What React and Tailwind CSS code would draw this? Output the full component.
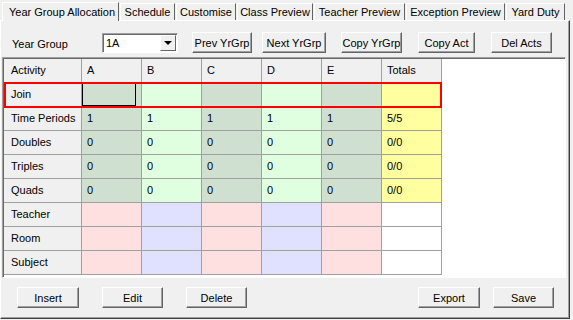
import React from "react";

const tabs = [
  { label: "Schedule", w: 55 },
  { label: "Customise", w: 60 },
  { label: "Class Preview", w: 76 },
  { label: "Teacher Preview", w: 91 },
  { label: "Exception Preview", w: 99 },
  { label: "Yard Duty", w: 59 },
];

const cols = ["A", "B", "C", "D", "E"];

const rows = [
  { name: "Join", vals: ["", "", "", "", ""], total: "", kind: "green" },
  { name: "Time Periods", vals: ["1", "1", "1", "1", "1"], total: "5/5", kind: "green" },
  { name: "Doubles", vals: ["0", "0", "0", "0", "0"], total: "0/0", kind: "green" },
  { name: "Triples", vals: ["0", "0", "0", "0", "0"], total: "0/0", kind: "green" },
  { name: "Quads", vals: ["0", "0", "0", "0", "0"], total: "0/0", kind: "green" },
  { name: "Teacher", vals: ["", "", "", "", ""], total: "", kind: "pink" },
  { name: "Room", vals: ["", "", "", "", ""], total: "", kind: "pink" },
  { name: "Subject", vals: ["", "", "", "", ""], total: "", kind: "pink" },
];

function cellBg(kind, i) {
  const odd = i % 2 === 0;
  if (kind === "green") return odd ? "bg-[#d0e0d0]" : "bg-[#e0ffe0]";
  return odd ? "bg-[#ffe0e0]" : "bg-[#e0e0ff]";
}

function Btn({ children, w, className = "" }) {
  return (
    <div
      className={`flex h-[21px] items-center justify-center whitespace-nowrap border border-t-white border-l-white border-r-[#646464] border-b-[#646464] bg-[#f0f0f0] pt-[1px] shadow-[inset_-1px_-1px_0_#a0a0a0] ${className}`}
      style={{ width: w }}
    >
      {children}
    </div>
  );
}

export default function App() {
  return (
    <div
      className="relative h-[320px] w-[573px] overflow-hidden whitespace-nowrap bg-[#f0f0f0] text-[11px] leading-none text-black"
      style={{ fontFamily: '"Liberation Sans", Arial, sans-serif' }}
    >
      {/* tab strip */}
      <div className="flex h-[20px] items-end pl-[2px]">
        <div className="relative z-10 -mb-[1px] flex h-[19px] w-[117px] items-start border-l border-t border-l-white border-t-white border-r border-r-[#646464] bg-[#f0f0f0] pl-[6px] pt-[4px]">
          Year Group Allocation
        </div>
        {tabs.map((t) => (
          <div
            key={t.label}
            className="ml-[1px] flex h-[17px] items-center justify-center border-l border-t border-l-white border-t-white border-r border-r-[#646464] bg-[#f0f0f0] pt-[1px]"
            style={{ width: t.w }}
          >
            {t.label}
          </div>
        ))}
      </div>

      {/* panel */}
      <div className="flex h-[299px] w-[570px] flex-col border border-t-white border-l-white border-r-[#404040] border-b-[#404040] shadow-[inset_-1px_-1px_0_#a0a0a0]">
        {/* top toolbar */}
        <div className="mt-[11px] flex h-[21px] items-center">
          <span className="ml-[11px] w-[90px] pt-[3px]">Year Group</span>
          <div className="flex h-[20px] w-[76px] items-center border border-t-[#a0a0a0] border-l-[#a0a0a0] border-r-white border-b-white bg-white shadow-[inset_1px_1px_0_#696969]">
            <span className="ml-[3px] mt-[1px] flex-1">1A</span>
            <div className="mr-[1px] flex h-[16px] w-[16px] items-center justify-center border border-t-white border-l-white border-r-[#646464] border-b-[#646464] bg-[#f0f0f0]">
              <div className="h-0 w-0 border-x-[4px] border-t-[4px] border-x-transparent border-t-black" />
            </div>
          </div>
          <Btn w={60} className="ml-[14px]">Prev YrGrp</Btn>
          <Btn w={64} className="ml-[10px]">Next YrGrp</Btn>
          <Btn w={61} className="ml-[15px]">Copy YrGrp</Btn>
          <Btn w={57} className="ml-[16px]">Copy Act</Btn>
          <Btn w={61} className="ml-[16px]">Del Acts</Btn>
        </div>

        {/* grid */}
        <div className="relative ml-[1px] mt-[4px] h-[221px] w-[564px] border border-t-[#a0a0a0] border-l-[#a0a0a0] border-r-white border-b-white bg-white shadow-[inset_1px_1px_0_#696969]">
          <div className="ml-[1px] mt-[1px] flex flex-col">
            <div className="flex h-[24px]">
              <div className="flex w-[78px] items-center border-b border-r border-[#a0a0a0] bg-[#f0f0f0] pl-[7px]">
                Activity
              </div>
              {cols.map((c) => (
                <div
                  key={c}
                  className="flex w-[60px] items-center border-b border-r border-[#a0a0a0] bg-[#f0f0f0] pl-[5px]"
                >
                  {c}
                </div>
              ))}
              <div className="flex w-[60px] items-center border-b border-r border-[#a0a0a0] bg-[#f0f0f0] pl-[5px]">
                Totals
              </div>
            </div>
            {rows.map((r, ri) => (
              <div key={r.name} className="flex h-[24px]">
                <div className="flex w-[78px] items-center border-b border-r border-[#a0a0a0] bg-[#f0f0f0] pl-[7px]">
                  {r.name}
                </div>
                {r.vals.map((v, i) => (
                  <div
                    key={i}
                    className={`flex w-[60px] items-center border-b border-r border-[#a0a0a0] pl-[5px] ${cellBg(r.kind, i)}`}
                  >
                    {ri === 0 && i === 0 ? (
                      <div className="-ml-[5px] h-full w-full border border-black" />
                    ) : (
                      v
                    )}
                  </div>
                ))}
                <div
                  className={`flex w-[60px] items-center border-b border-r border-[#a0a0a0] pl-[5px] ${
                    r.kind === "green" ? "bg-[#ffffa0]" : "bg-white"
                  }`}
                >
                  {r.total}
                </div>
              </div>
            ))}
          </div>
          {/* selection highlight on Join row */}
          <div className="pointer-events-none absolute left-[1px] top-[24px] h-[26px] w-[438px] border-2 border-[#ff0000]" />
        </div>

        {/* bottom buttons */}
        <div className="mt-[9px] flex h-[21px] items-center">
          <Btn w={62} className="ml-[16px]">Insert</Btn>
          <Btn w={61} className="ml-[23px]">Edit</Btn>
          <Btn w={61} className="ml-[23px]">Delete</Btn>
          <Btn w={62} className="ml-[171px]">Export</Btn>
          <Btn w={61} className="ml-[13px]">Save</Btn>
        </div>
      </div>
    </div>
  );
}
